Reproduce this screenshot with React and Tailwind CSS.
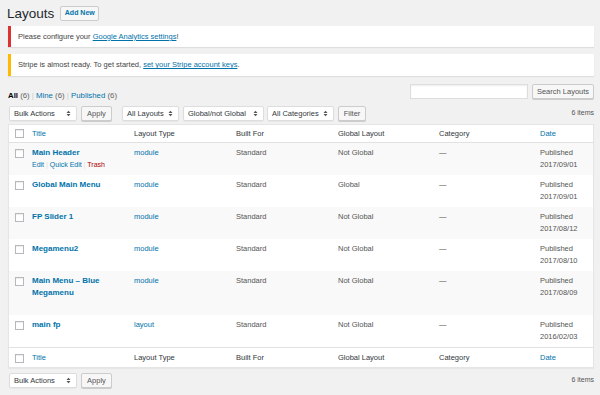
import React from "react";

const font = { fontFamily: '"Liberation Sans", Arial, sans-serif' };

function Arrows() {
  return (
    <svg width="5" height="7" viewBox="0 0 5 7" className="shrink-0">
      <path d="M0.5 3 L2.5 0.8 L4.5 3 Z" fill="#555" />
      <path d="M0.5 4 L2.5 6.2 L4.5 4 Z" fill="#555" />
    </svg>
  );
}

function Select({ label, w }) {
  return (
    <div
      className={`h-[15px] ${w} flex items-center justify-between pl-[4px] pr-[5px] bg-white border border-[#ddd] rounded-[2px] text-[7.5px] text-[#32373c] shadow-[0_1px_1px_rgba(0,0,0,0.04)]`}
    >
      <span className="whitespace-nowrap">{label}</span>
      <Arrows />
    </div>
  );
}

function Btn({ label, w }) {
  return (
    <div
      className={`h-[15px] ${w} flex items-center justify-center bg-[#f7f7f7] border border-[#ccc] rounded-[2px] text-[7.5px] text-[#555] shadow-[0_1px_0_#ccc]`}
    >
      {label}
    </div>
  );
}

function Check() {
  return <div className="w-[9px] h-[9px] bg-white border border-[#b4b9be] shadow-[inset_0_1px_1px_rgba(0,0,0,0.07)]" />;
}

const rows = [
  { t: ["Main Header"], type: "module", g: "Not Global", d: "2017/09/01", actions: true },
  { t: ["Global Main Menu"], type: "module", g: "Global", d: "2017/09/01" },
  { t: ["FP Slider 1"], type: "module", g: "Not Global", d: "2017/08/12" },
  { t: ["Megamenu2"], type: "module", g: "Not Global", d: "2017/08/10" },
  { t: ["Main Menu – Blue", "Megamenu"], type: "module", g: "Not Global", d: "2017/08/09" },
  { t: ["main fp"], type: "layout", g: "Not Global", d: "2016/02/03" },
];

const grid = "grid grid-cols-[20px_102px_102px_102px_101px_101px_1fr]";

function HeadRow({ border }) {
  return (
    <div className={`${grid} h-[18px] items-center text-[7.5px] text-[#32373c] ${border}`}>
      <div className="pl-[6px] flex items-center"><Check /></div>
      <div className="pl-[3px] text-[#0073aa]">Title</div>
      <div className="pl-[3px]">Layout Type</div>
      <div className="pl-[3px]">Built For</div>
      <div className="pl-[3px]">Global Layout</div>
      <div className="pl-[3px]">Category</div>
      <div className="pl-[3px] text-[#0073aa]">Date</div>
    </div>
  );
}

export default function App() {
  return (
    <div style={font} className="w-[600px] h-[395px] overflow-hidden bg-[#f1f1f1] pl-[8px] pr-[6px]">
      {/* Title */}
      <div className="flex items-center pt-[6px] h-[21px]">
        <h1 className="text-[13.5px] leading-[15px] text-[#23282d] -ml-[1px]">Layouts</h1>
        <div className="ml-[6px] h-[15px] w-[39px] flex items-center justify-center bg-[#f7f7f7] border border-[#ccc] rounded-[2px] text-[7px] font-bold text-[#0073aa]">
          Add New
        </div>
      </div>

      {/* Notices */}
      <div className="mt-[5px] h-[21px] bg-white border-l-[3px] border-[#dc3232] shadow-[0_1px_1px_rgba(0,0,0,0.08)] flex items-center pl-[7px] text-[7.5px] text-[#444]">
        <span>
          Please configure your <span className="text-[#0073aa] underline">Google Analytics settings</span>!
        </span>
      </div>
      <div className="mt-[7px] h-[22px] bg-white border-l-[3px] border-[#ffb900] shadow-[0_1px_1px_rgba(0,0,0,0.08)] flex items-center pl-[7px] text-[7.5px] text-[#444]">
        <span>
          Stripe is almost ready. To get started, <span className="text-[#0073aa] underline">set your Stripe account keys</span>.
        </span>
      </div>

      {/* Subsubsub + search */}
      <div className="mt-[8px] flex justify-between items-start">
        <div className="mt-[7px] text-[7.8px] text-[#666] leading-[9px]">
          <span className="font-bold text-[#000]">All</span> (6) <span className="text-[#ccc]">|</span>{" "}
          <span className="text-[#0073aa]">Mine</span> (6) <span className="text-[#ccc]">|</span>{" "}
          <span className="text-[#0073aa]">Published</span> (6)
        </div>
        <div className="flex items-center gap-[4px]">
          <div className="w-[118px] h-[15px] bg-white border border-[#ddd] shadow-[inset_0_1px_2px_rgba(0,0,0,0.07)]" />
          <Btn label="Search Layouts" w="w-[62px]" />
        </div>
      </div>

      {/* Filters */}
      <div className="mt-[6px] flex items-center">
        <div className="ml-[1px]"><Select label="Bulk Actions" w="w-[68px]" /></div>
        <div className="ml-[4px]"><Btn label="Apply" w="w-[31px]" /></div>
        <div className="ml-[10px]"><Select label="All Layouts" w="w-[57px]" /></div>
        <div className="ml-[4px]"><Select label="Global/not Global" w="w-[81px]" /></div>
        <div className="ml-[3px]"><Select label="All Categories" w="w-[67px]" /></div>
        <div className="ml-[4px]"><Btn label="Filter" w="w-[28px]" /></div>
        <div className="ml-auto text-[7px] text-[#555]">6 items</div>
      </div>

      {/* Table */}
      <div className="mt-[3px] bg-white border border-[#e5e5e5] shadow-[0_1px_1px_rgba(0,0,0,0.04)]">
        <HeadRow border="border-b border-[#e1e1e1]" />
        {rows.map((r, i) => (
          <div
            key={i}
            className={`${grid} pt-[4px] pb-[4px] text-[7.5px] leading-[12px] text-[#555] ${i % 2 === 0 ? "bg-[#f9f9f9]" : "bg-white"}`}
          >
            <div className="pl-[6px] pt-[2px]"><Check /></div>
            <div className="pl-[3px] pr-[4px]">
              {r.t.map((l, k) => (
                <div key={k} className="font-bold text-[#0073aa] text-[8px]">{l}</div>
              ))}
              <div className={`text-[7px] leading-[12px] ${r.actions ? "" : "invisible"}`}>
                <span className="text-[#0073aa]">Edit</span> <span className="text-[#ddd]">|</span>{" "}
                <span className="text-[#0073aa]">Quick Edit</span> <span className="text-[#ddd]">|</span>{" "}
                <span className="text-[#a00]">Trash</span>
              </div>
            </div>
            <div className="pl-[3px] text-[#0073aa]">{r.type}</div>
            <div className="pl-[3px]">Standard</div>
            <div className="pl-[3px]">{r.g}</div>
            <div className="pl-[3px]">—</div>
            <div className="pl-[3px]">
              <div>Published</div>
              <div>{r.d}</div>
            </div>
          </div>
        ))}
        <div className="border-t border-[#e1e1e1]">
          <div className="h-[1px]" />
          <HeadRow border="" />
        </div>
      </div>

      {/* Bottom nav */}
      <div className="mt-[5px] flex items-center">
        <div className="ml-[1px]"><Select label="Bulk Actions" w="w-[68px]" /></div>
        <div className="ml-[4px]"><Btn label="Apply" w="w-[31px]" /></div>
        <div className="ml-auto text-[7px] text-[#555]">6 items</div>
      </div>
    </div>
  );
}
